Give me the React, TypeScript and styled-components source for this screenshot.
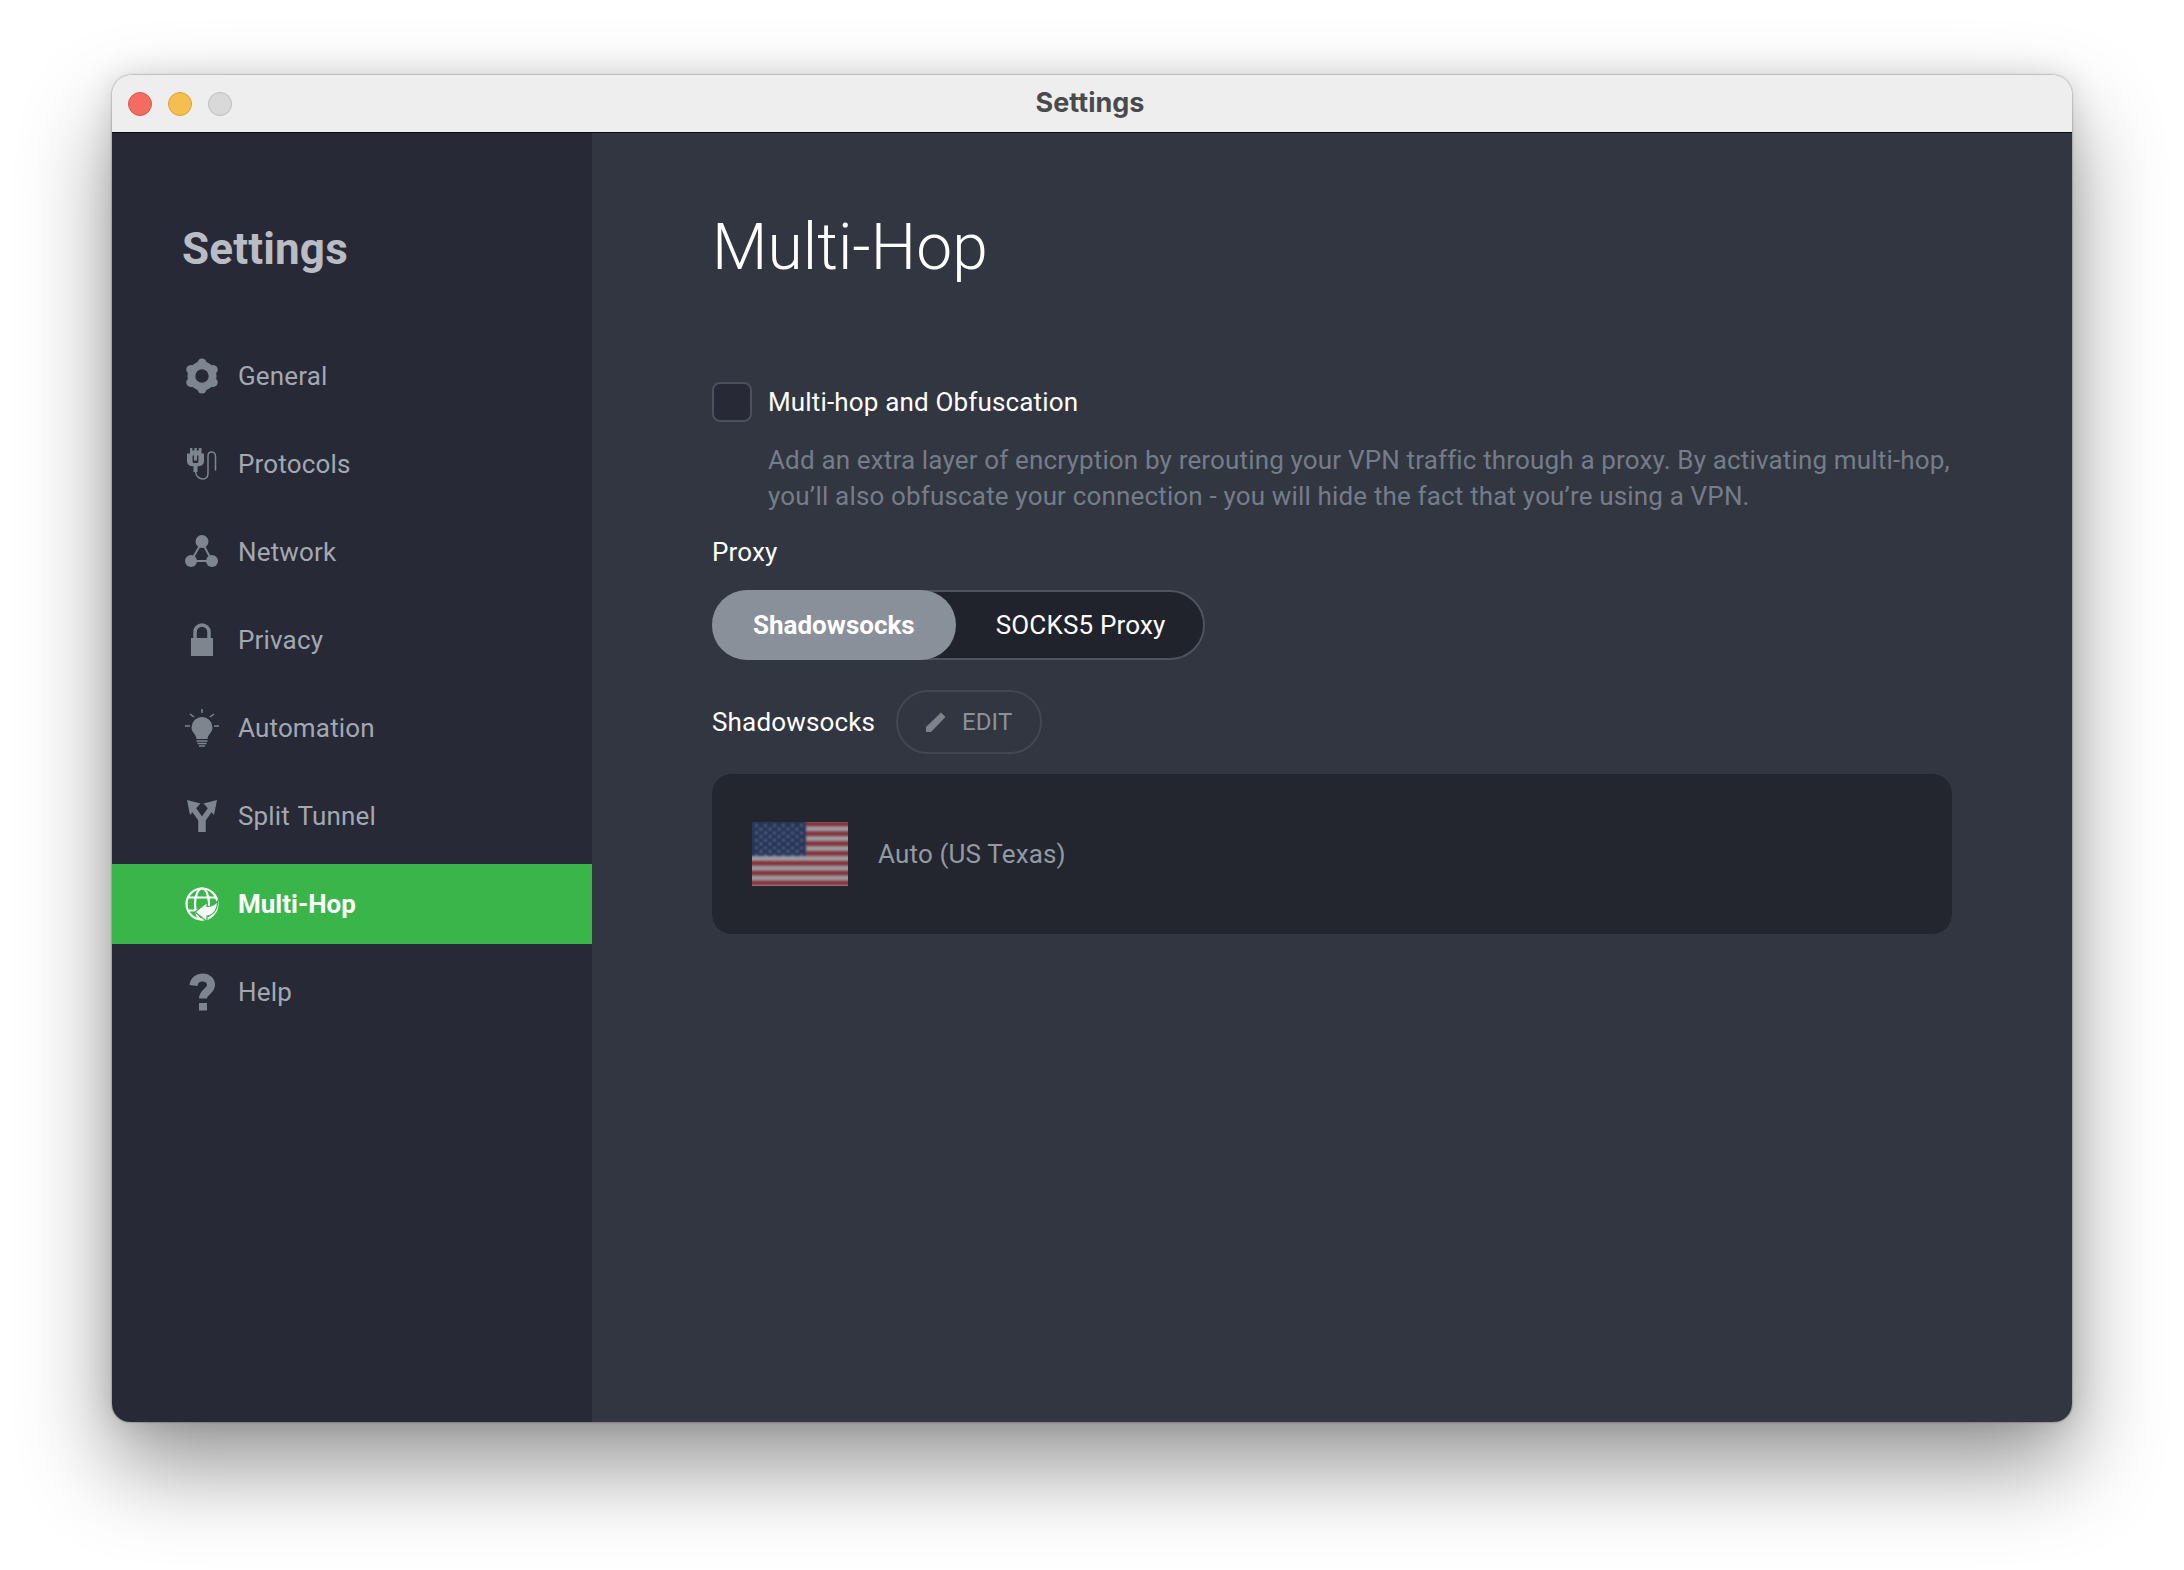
import { createGlobalStyle } from 'styled-components';
import styled from 'styled-components';
import type { ReactNode } from 'react';

const GlobalStyle = createGlobalStyle`
  html, body {
    margin: 0;
    padding: 0;
    background: #ffffff;
  }
  * {
    box-sizing: border-box;
  }
`;

const Page = styled.div`
  width: 2184px;
  height: 1570px;
  padding: 75px 112px 148px;
  overflow: hidden;
  font-family: Roboto, 'Liberation Sans', sans-serif;
`;

const Window = styled.div`
  height: 1347px;
  display: flex;
  flex-direction: column;
  border-radius: 20px 20px 18px 18px;
  overflow: hidden;
  box-shadow: 0 44px 90px rgba(0, 0, 0, 0.42), 0 0 30px rgba(0, 0, 0, 0.12), 0 0 2px rgba(0, 0, 0, 0.55);
`;

const TitleBar = styled.div`
  position: relative;
  flex: none;
  height: 58px;
  display: flex;
  align-items: center;
  gap: 16px;
  padding-left: 16px;
  background: #eeeeee;
  border-bottom: 1px solid #0c0c10;
`;

const Light = styled.span<{ $fill: string; $edge: string }>`
  width: 24px;
  height: 24px;
  border-radius: 50%;
  background: ${({ $fill }) => $fill};
  border: 1px solid ${({ $edge }) => $edge};
`;

const TitleText = styled.div`
  position: absolute;
  left: 0;
  right: 4px;
  top: 0;
  bottom: 2px;
  display: flex;
  align-items: center;
  justify-content: center;
  font-family: Inter, sans-serif;
  font-size: 27px;
  font-weight: 700;
  color: #4a4a4c;
`;

const Body = styled.div`
  flex: 1;
  display: flex;
  min-height: 0;
`;

const Sidebar = styled.aside`
  flex: none;
  width: 480px;
  padding-top: 90px;
  background: #272936;
`;

const SideTitle = styled.div`
  margin: 0 0 61px 70px;
  font-size: 44px;
  line-height: 52px;
  font-weight: 700;
  letter-spacing: 0.15px;
  color: #b9bcc3;
`;

const Nav = styled.nav`
  display: flex;
  flex-direction: column;
  gap: 8px;
`;

const NavRow = styled.div<{ $active?: boolean }>`
  height: 80px;
  display: flex;
  align-items: center;
  gap: 18px;
  padding-left: 72px;
  font-size: 26px;
  letter-spacing: ${({ $active }) => ($active ? '0' : '0.16px')};
  word-spacing: 1.5px;
  font-weight: ${({ $active }) => ($active ? 700 : 400)};
  color: ${({ $active }) => ($active ? '#ffffff' : '#a2a8b2')};
  background: ${({ $active }) => ($active ? '#39b54a' : 'transparent')};
`;

const NavIcon = styled.svg`
  flex: none;
  width: 36px;
  height: 36px;
  overflow: visible;
`;

const Main = styled.main`
  flex: 1;
  padding: 77px 120px 0;
  background: #323641;
  color: #ffffff;
  letter-spacing: 0.16px;
`;

const Heading = styled.h1`
  margin: 0 0 96px;
  font-size: 64px;
  line-height: 76px;
  font-weight: 300;
  letter-spacing: 0.1px;
  color: #ffffff;
`;

const CheckRow = styled.label`
  display: flex;
  align-items: center;
  gap: 16px;
  height: 40px;
  font-size: 26px;
`;

const CheckBox = styled.span`
  flex: none;
  width: 40px;
  height: 40px;
  border-radius: 8px;
  background: #272936;
  border: 2px solid #4b4f5e;
`;

const Description = styled.p`
  margin: 20px 0 0 56px;
  font-size: 26px;
  line-height: 36px;
  color: #757c8a;
`;

const FieldLabel = styled.div`
  margin-top: 20px;
  font-size: 26px;
  line-height: 36px;
`;

const Segmented = styled.div`
  width: 493px;
  height: 70px;
  margin-top: 20px;
  display: flex;
  align-items: center;
  border: 2px solid #4f5360;
  border-radius: 35px;
  background: #21232c;
`;

const Segment = styled.div<{ $active?: boolean }>`
  flex: none;
  height: ${({ $active }) => ($active ? '70px' : 'auto')};
  margin-left: ${({ $active }) => ($active ? '-2px' : '0')};
  padding: 0 ${({ $active }) => ($active ? '41px' : '40px')};
  display: flex;
  align-items: center;
  border-radius: 35px;
  white-space: nowrap;
  font-size: 26px;
  letter-spacing: ${({ $active }) => ($active ? '0' : '0.16px')};
  font-weight: ${({ $active }) => ($active ? 700 : 400)};
  background: ${({ $active }) => ($active ? '#8a9099' : 'transparent')};
`;

const EditRow = styled.div`
  margin-top: 30px;
  display: flex;
  align-items: center;
  gap: 21px;
  font-size: 26px;
`;

const EditButton = styled.div`
  width: 146px;
  height: 64px;
  display: flex;
  align-items: center;
  justify-content: center;
  gap: 16px;
  border: 2px solid #434754;
  border-radius: 32px;
  font-size: 24px;
  color: #8b929c;
`;

const PencilIcon = styled.svg`
  width: 20px;
  height: 20px;
`;

const ServerCard = styled.div`
  height: 160px;
  margin-top: 20px;
  padding-left: 40px;
  display: flex;
  align-items: center;
  gap: 30px;
  border-radius: 20px;
  background: #23262e;
  font-size: 26px;
  color: #939aa4;
`;

const FlagIcon = styled.svg`
  flex: none;
  width: 96px;
  height: 64px;
`;

const ICON = '#7e858f';

const icons: Record<string, ReactNode> = {
  general: (
    <g fill={ICON} stroke={ICON}>
      <circle cx="18" cy="18" r="10.6" fill="none" strokeWidth="7.800" />
      {[0, 60, 120, 180, 240, 300].map((a) => (
        <line
          key={a}
          x1="18"
          y1="6"
          x2="18"
          y2="5"
          strokeWidth="9"
          strokeLinecap="round"
          transform={`rotate(${a} 18 18)`}
        />
      ))}
    </g>
  ),
  protocols: (
    <g>
      <path
        fill={ICON}
        fillRule="evenodd"
        d="M6 2h2.4v2.6h2V2h2.4v2.6h2V2H17.500v5.500H20V15c0 3-2 5.200-5.200 5.200H13.500V26H9.500V20.200H8.200C5 20.200 3 18 3 15V7.500h3zM8.600 9.500V15.500C8.600 16.500 9.500 17 10.400 17h2.200c.9 0 1.800-.5 1.800-1.500V9.500H13v5h-3v-5z"
      />
      <path
        fill="none"
        stroke={ICON}
        strokeWidth="1.500"
        strokeLinecap="round"
        d="M11.500 26c.5 4.500 4 7 7.500 7 3.500 0 5-2.500 5-6V10c0-2.500 1.500-4 3.500-4s4 1.500 4 4v14"
      />
    </g>
  ),
  network: (
    <g fill={ICON} stroke={ICON}>
      <path d="M18 8 7 27H28Z" fill="none" strokeWidth="2" />
      <circle cx="18" cy="7.500" r="6.500" stroke="none" />
      <circle cx="7" cy="27" r="6" stroke="none" />
      <circle cx="28" cy="27" r="6" stroke="none" />
    </g>
  ),
  privacy: (
    <g>
      <path d="M11 17V10a7 7 0 0 1 14 0v7" fill="none" stroke={ICON} strokeWidth="3.500" />
      <rect x="7" y="16" width="22" height="18" fill={ICON} />
    </g>
  ),
  automation: (
    <g stroke={ICON} fill={ICON}>
      <path
        stroke="none"
        d="M18 7a10.500 10.500 0 0 1 10.500 10.500c0 5-4.500 6.500-5 11.500h-11c-.5-5-5-6.500-5-11.500A10.500 10.500 0 0 1 18 7z"
      />
      <path
        fill="none"
        strokeWidth="1.500"
        d="M12.500 31h11M13.500 33.500h9M15 36h6M18-1v4M1 16h5M30 16h5M6 4l4 3M30 4l-4 3"
      />
    </g>
  ),
  split: (
    <g fill={ICON}>
      <path d="M18 34V22" fill="none" stroke={ICON} strokeWidth="7.500" />
      <path d="M18 23 8 9M18 23 28 9" fill="none" stroke={ICON} strokeWidth="5.500" />
      <path d="M3 2 16.500 5.500 6 17zM33 2 19.500 5.500 30 17z" />
    </g>
  ),
  multihop: (
    <g>
      <g fill="none" stroke="#fff" strokeWidth="2.200">
        <circle cx="18" cy="18" r="15.500" />
        <ellipse cx="18" cy="18" rx="7" ry="15.500" />
        <path d="M4 11.500h28M4 24.500h28" />
      </g>
      <path
        d="M11 26 23 16.500V20.500c4 0 8-1.500 10.500-5.500.5 7-3 14-10.500 15V35.500z"
        fill="#fff"
        stroke="#39b54a"
        strokeWidth="1.200"
      />
    </g>
  ),
  help: (
    <g fill={ICON}>
      <path
        d="M9.500 11.500C10 6.500 14 3.500 18.500 3.500 24 3.500 27 7 27 11c0 6.500-8 6.500-8 13.500"
        fill="none"
        stroke={ICON}
        strokeWidth="8"
      />
      <rect x="15" y="29" width="8" height="7.500" />
    </g>
  ),
};

const navItems = [
  { key: 'general', label: 'General' },
  { key: 'protocols', label: 'Protocols' },
  { key: 'network', label: 'Network' },
  { key: 'privacy', label: 'Privacy' },
  { key: 'automation', label: 'Automation' },
  { key: 'split', label: 'Split Tunnel' },
  { key: 'multihop', label: 'Multi-Hop', active: true },
  { key: 'help', label: 'Help' },
];

function UsFlag() {
  const stripes = Array.from({ length: 7 }, (_, i) => i);
  const stars: [number, number][] = [];
  for (let row = 0; row < 9; row++) {
    const count = row % 2 === 0 ? 6 : 5;
    for (let col = 0; col < count; col++) {
      stars.push([(row % 2 === 0 ? 4.500 : 9) + col * 9, 3.500 + row * 3.700]);
    }
  }
  return (
    <FlagIcon viewBox="0 0 96 64">
      <defs>
        <filter id="soft" x="-2%" y="-2%" width="104%" height="104%">
          <feGaussianBlur stdDeviation="0.9" />
        </filter>
      </defs>
      <rect width="96" height="64" fill="#9b9ba0" />
      <g filter="url(#soft)">
        {stripes.map((i) => (
          <rect key={i} x="-2" y={i * (64 / 6.5) - 0.5} width="100" height="4.700" fill="#87323a" />
        ))}
        <rect x="-2" y="-2" width="56" height="36" fill="#27365a" />
        {stars.map(([cx, cy]) => (
          <circle key={`${cx}-${cy}`} cx={cx} cy={cy} r="1.300" fill="#5f6a84" />
        ))}
      </g>
    </FlagIcon>
  );
}

export default function App() {
  return (
    <Page>
      <GlobalStyle />
      <Window>
        <TitleBar>
          <Light $fill="#f26d60" $edge="#d9574b" />
          <Light $fill="#f6be4f" $edge="#d9a23c" />
          <Light $fill="#d9d9d9" $edge="#bdbdbd" />
          <TitleText>Settings</TitleText>
        </TitleBar>
        <Body>
          <Sidebar>
            <SideTitle>Settings</SideTitle>
            <Nav>
              {navItems.map((item) => (
                <NavRow key={item.key} $active={item.active}>
                  <NavIcon viewBox="0 0 36 36">{icons[item.key]}</NavIcon>
                  {item.label}
                </NavRow>
              ))}
            </Nav>
          </Sidebar>
          <Main>
            <Heading>Multi-Hop</Heading>
            <CheckRow>
              <CheckBox />
              Multi-hop and Obfuscation
            </CheckRow>
            <Description>
              Add an extra layer of encryption by rerouting your VPN traffic through a proxy. By activating multi-hop,
              you’ll also obfuscate your connection - you will hide the fact that you’re using a VPN.
            </Description>
            <FieldLabel>Proxy</FieldLabel>
            <Segmented>
              <Segment $active>Shadowsocks</Segment>
              <Segment>SOCKS5 Proxy</Segment>
            </Segmented>
            <EditRow>
              Shadowsocks
              <EditButton>
                <PencilIcon viewBox="0 0 20 20">
                  <path d="M0 20v-5L15 .5 19.500 5 5 20z" fill="#7e8289" />
                </PencilIcon>
                EDIT
              </EditButton>
            </EditRow>
            <ServerCard>
              <UsFlag />
              Auto (US Texas)
            </ServerCard>
          </Main>
        </Body>
      </Window>
    </Page>
  );
}
